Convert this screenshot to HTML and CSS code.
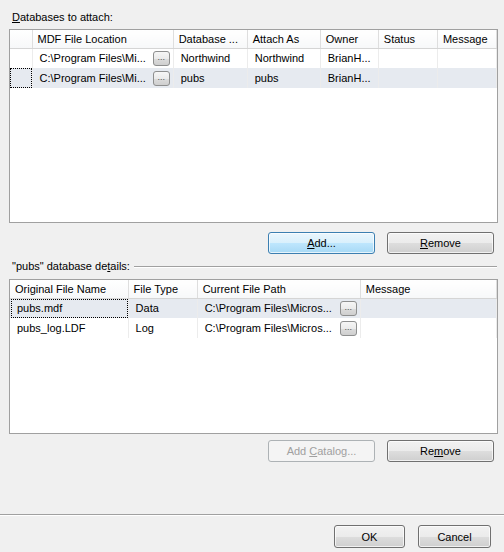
FILE: index.html
```html
<!DOCTYPE html>
<html>
<head>
<meta charset="utf-8">
<link rel="stylesheet" href="styles.css">
</head>
<body>
<div class="dialog">
  <div class="label first"><u>D</u>atabases to attach:</div>
  <div class="grid g1">
    <table>
      <colgroup>
        <col style="width:22px"><col style="width:141px"><col style="width:74px"><col style="width:73px"><col style="width:58px"><col style="width:59px"><col style="width:59px">
      </colgroup>
      <thead>
        <tr><th></th><th>MDF File Location</th><th>Database ...</th><th>Attach As</th><th>Owner</th><th>Status</th><th>Message</th></tr>
      </thead>
      <tbody>
        <tr><td class="rh"></td><td><div class="cellbtn"><span>C:\Program Files\Mi...</span><span class="dots">...</span></div></td><td>Northwind</td><td>Northwind</td><td>BrianH...</td><td></td><td></td></tr>
        <tr class="sel"><td class="rh"><div class="focus"></div></td><td><div class="cellbtn"><span>C:\Program Files\Mi...</span><span class="dots">...</span></div></td><td>pubs</td><td>pubs</td><td>BrianH...</td><td></td><td></td></tr>
      </tbody>
    </table>
  </div>
  <div class="btnrow r1">
    <button class="btn default"><u>A</u>dd...</button>
    <button class="btn"><u>R</u>emove</button>
  </div>
  <div class="group">
    <span class="label">"pubs" database de<u>t</u>ails:</span>
    <span class="etch"></span>
  </div>
  <div class="grid g2">
    <table>
      <colgroup>
        <col style="width:118px"><col style="width:69px"><col style="width:163px"><col style="width:136px">
      </colgroup>
      <thead>
        <tr><th>Original File Name</th><th>File Type</th><th>Current File Path</th><th>Message</th></tr>
      </thead>
      <tbody>
        <tr class="sel"><td class="fc"><div class="focus2">pubs.mdf</div></td><td>Data</td><td><div class="cellbtn"><span>C:\Program Files\Micros...</span><span class="dots">...</span></div></td><td></td></tr>
        <tr><td>pubs_log.LDF</td><td>Log</td><td><div class="cellbtn"><span>C:\Program Files\Micros...</span><span class="dots">...</span></div></td><td></td></tr>
      </tbody>
    </table>
  </div>
  <div class="btnrow r2">
    <button class="btn disabled">Add <u>C</u>atalog...</button>
    <button class="btn">Re<u>m</u>ove</button>
  </div>
  <div class="footer">
    <button class="btn ok">OK</button>
    <button class="btn cancel">Cancel</button>
  </div>
</div>
</body>
</html>
```

FILE: styles.css
```css
* { box-sizing: border-box; }
html, body { margin: 0; padding: 0; }
body {
  width: 504px;
  height: 552px;
  background: #f0f0f0;
  font-family: "Liberation Sans", Arial, sans-serif;
  font-size: 11px;
  color: #000;
  overflow: hidden;
}
.dialog {
  height: 552px;
  display: flex;
  flex-direction: column;
}
.label { line-height: 15px; height: 15px; white-space: nowrap; }
.label.first { margin: 10px 0 4px 12px; }
.grid {
  margin-left: 9px;
  width: 489px;
  background: #fff;
  border: 1px solid #a0a0a0;
  overflow: hidden;
}
.g1 { height: 194px; }
.g2 { height: 155px; margin-top: 5px; }
table {
  table-layout: fixed;
  border-collapse: collapse;
  width: 487px;
}
th {
  height: 18px;
  font-weight: normal;
  text-align: left;
  padding: 0 0 0 5px;
  border-right: 1px solid #dedede;
  border-bottom: 1px solid #d5d5d5;
  background: linear-gradient(#ffffff, #f7f8f9);
  white-space: nowrap;
  overflow: hidden;
}
td {
  height: 20px;
  padding: 0 0 0 7px;
  border-right: 1px solid #ececec;
  white-space: nowrap;
  overflow: hidden;
}
td.rh { padding: 0; }
tr.sel td { background: #e6eaf0; }
.focus {
  height: 20px;
  border: 1px dotted #000;
}
td.fc { padding: 0 0 0 1px; }
.focus2 {
  height: 19px;
  line-height: 17px;
  border: 1px dotted #000;
  padding-left: 5px;
}
.cellbtn {
  display: flex;
  align-items: center;
  justify-content: space-between;
  padding-right: 3px;
}
.dots {
  width: 17px;
  height: 15px;
  border: 1px solid #8e8f8f;
  border-radius: 3px;
  background: linear-gradient(#f6f6f6 0%, #ebebeb 50%, #dcdcdc 51%, #cfcfcf 100%);
  font-size: 9px;
  line-height: 10px;
  text-align: center;
  color: #555;
  flex: none;
}
.btnrow {
  display: flex;
  justify-content: flex-end;
  gap: 12px;
  padding-right: 10px;
}
.r1 { margin-top: 9px; }
.r2 { margin-top: 6px; }
.btn {
  width: 107px;
  height: 22px;
  font: inherit;
  color: #000;
  border: 1px solid #707070;
  border-radius: 3px;
  background: linear-gradient(#f2f2f2 0%, #ebebeb 50%, #dddddd 51%, #cfcfcf 100%);
  box-shadow: inset 0 0 0 1px rgba(255,255,255,0.7);
  padding: 0;
  text-align: center;
}
.btn.default {
  border-color: #3c7fb1;
  background: linear-gradient(#eaf6fd 0%, #d9f0fc 50%, #bee6fd 51%, #a7d9f5 100%);
}
.btn.disabled {
  color: #a0a0a0;
  border-color: #adb2b5;
  background: #f4f4f4;
  box-shadow: none;
}
.group {
  display: flex;
  align-items: center;
  margin: 5px 7px 0 12px;
  height: 15px;
}
.etch {
  flex: 1;
  margin-left: 4px;
  height: 2px;
  border-top: 1px solid #a0a0a0;
  border-bottom: 1px solid #fff;
}
.footer {
  margin-top: auto;
  height: 38px;
  border-top: 1px solid #a0a0a0;
  box-shadow: inset 0 1px 0 #fff;
  display: flex;
  justify-content: flex-end;
  gap: 13px;
  padding: 10px 13px 0 0;
}
.btn.ok { width: 71px; height: 23px; }
.btn.cancel { width: 73px; height: 23px; }
```
